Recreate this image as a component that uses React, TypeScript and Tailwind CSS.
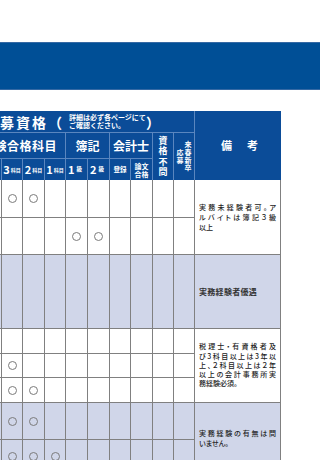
import React from "react";

const WHITE = "bg-white";
const LAV = "bg-[#d0d6e9]";

type BodyRow = { bg: string; marks: number[] };

const rows: BodyRow[] = [
  { bg: WHITE, marks: [3, 4] },
  { bg: WHITE, marks: [6, 7] },
  { bg: LAV, marks: [] },
  { bg: WHITE, marks: [0] },
  { bg: WHITE, marks: [1, 3] },
  { bg: WHITE, marks: [2, 3, 4] },
  { bg: LAV, marks: [3, 4] },
  { bg: LAV, marks: [3, 4, 5] },
];

function Circle() {
  return <span className="block w-[9px] h-[9px] rounded-full border border-[#7b7b7b]" />;
}

function Justified({ lines, last, leading }: { lines: string[]; last: string; leading: string }) {
  return (
    <div className={"flex flex-col text-[7px] font-medium text-[#222] [font-feature-settings:'palt'] " + leading}>
      {lines.map((l, i) => (
        <div key={i} className="w-[77px] whitespace-nowrap [text-align-last:justify] text-justify">
          {l}
        </div>
      ))}
      <div className="w-[77px] whitespace-nowrap">{last}</div>
    </div>
  );
}

function Note({ index }: { index: number }) {
  if (index === 0)
    return (
      <div className={"row-span-2 flex items-center pl-[4px] " + WHITE}>
        <Justified lines={["実務未経験者可。ア", "ルバイトは簿記３級"]} last="以上" leading="leading-[10px]" />
      </div>
    );
  if (index === 2)
    return (
      <div className={"flex items-center pl-[4px] " + LAV}>
        <span className="text-[8px] font-bold tracking-[0.3px] text-[#333] whitespace-nowrap">実務経験者優遇</span>
      </div>
    );
  if (index === 3)
    return (
      <div className={"row-span-3 flex items-center pl-[4px] " + WHITE}>
        <Justified
          lines={["税理士・有資格者及", "び3科目以上は3年以", "上、２科目以上は２年", "以上の会計事務所実"]}
          last="務経験必須。"
          leading="leading-[9.3px]"
        />
      </div>
    );
  if (index === 6)
    return (
      <div className={"row-span-2 flex items-center pl-[4px] " + LAV}>
        <Justified lines={["実務経験の有無は問"]} last="いません。" leading="leading-[10px]" />
      </div>
    );
  return null;
}

function Subj({ n }: { n: string }) {
  return (
    <div className="bg-[#0b4c98] flex items-center justify-center text-white font-bold">
      <span className="text-[11px] leading-none">{n}</span>
      <span className="text-[5px] leading-none ml-[1px]">科目</span>
    </div>
  );
}

function Kyu({ n }: { n: string }) {
  return (
    <div className="bg-[#0b4c98] flex items-center justify-start pl-[2px] text-white font-bold">
      <span className="text-[11px] leading-none">{n}</span>
      <span className="text-[5.5px] leading-none ml-[2px]">級</span>
    </div>
  );
}

export default function App() {
  return (
    <div className="w-[320px] h-[460px] overflow-hidden bg-white font-['Noto_Sans_CJK_JP',sans-serif]">
      <div className="h-[42px]" />
      <div className="h-[48px] bg-[#004f96] border-y border-[#3569a4]" />
      <div className="h-[21px]" />

      {/* header */}
      <div className="ml-[-65px] w-[346px] grid gap-px pl-px bg-[#5a86bf] grid-cols-[20px_21px_22px_20px_21px_20px_21px_21px_20px_21px_20px_20px_86px] grid-rows-[21px_25px_21px] text-white">
        <div className="col-span-12 bg-[#0b4c98] flex items-center pl-[48px] font-bold whitespace-nowrap">
          <span className="text-[14px] leading-none tracking-[2px]">応募資格（</span>
          <span className="ml-[5px] flex flex-col text-[7px] leading-[7.5px]">
            <span>詳細は必ず各ページにて</span>
            <span>ご確認ください。</span>
          </span>
          <span className="text-[14px] leading-none">）</span>
        </div>
        <div className="row-span-3 bg-[#0b4c98] flex items-center justify-center gap-[15px] pl-[3px] text-[11px] font-bold">
          <span>備</span>
          <span>考</span>
        </div>

        <div className="col-span-6 bg-[#0b4c98] flex items-center justify-end pr-[8px] text-[12px] font-bold tracking-[0.5px] whitespace-nowrap">
          税理士試験合格科目
        </div>
        <div className="col-span-2 bg-[#0b4c98] flex items-center justify-center text-[12px] font-bold">簿記</div>
        <div className="col-span-2 bg-[#0b4c98] flex items-center justify-center text-[12px] font-bold">会計士</div>
        <div className="row-span-2 bg-[#0b4c98] flex flex-col items-center justify-center text-[9px] leading-[10.5px] font-bold">
          <span>資</span>
          <span>格</span>
          <span>不</span>
          <span>問</span>
        </div>
        <div className="row-span-2 bg-[#0b4c98] flex items-center justify-center gap-[1px] text-[7px] leading-[7.75px] font-bold">
          <div className="flex flex-col items-center">
            <span>応</span>
            <span>募</span>
          </div>
          <div className="flex flex-col items-center">
            <span>来</span>
            <span>春</span>
            <span>新</span>
            <span>卒</span>
          </div>
        </div>

        <Subj n="5" />
        <Subj n="4" />
        <Subj n="4" />
        <Subj n="3" />
        <Subj n="2" />
        <Subj n="1" />
        <Kyu n="1" />
        <Kyu n="2" />
        <div className="bg-[#0b4c98] flex items-center justify-center text-[6.5px] font-bold">登録</div>
        <div className="bg-[#0b4c98] flex flex-col items-center justify-center text-[7px] leading-[8px] font-bold">
          <span>論文</span>
          <span>合格</span>
        </div>
      </div>

      {/* body */}
      <div className="ml-[-65px] w-[346px] grid gap-px px-px pb-px bg-[#808080] grid-cols-[20px_21px_22px_20px_21px_20px_21px_21px_20px_21px_20px_20px_85px] grid-rows-[37px_36px_73px_24px_23px_24px_36px_33px]">
        {rows.map((r, i) => (
          <React.Fragment key={i}>
            {Array.from({ length: 12 }).map((_, c) => (
              <div key={c} className={"flex items-center justify-center " + r.bg}>
                {r.marks.includes(c) ? <Circle /> : null}
              </div>
            ))}
            <Note index={i} />
          </React.Fragment>
        ))}
      </div>
    </div>
  );
}
